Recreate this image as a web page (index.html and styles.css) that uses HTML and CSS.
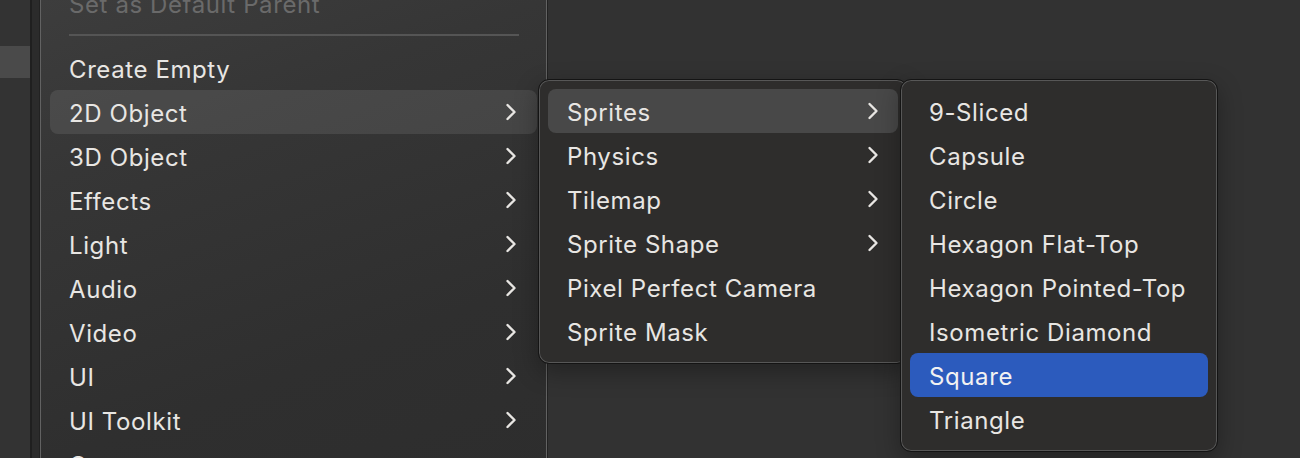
FILE: index.html
```html
<!DOCTYPE html>
<html lang="en">

<head>
  <meta charset="UTF-8">
  <title>GameObject Menu</title>
  <link rel="stylesheet" href="styles.css">
</head>

<body>
  <div class="desk">
    <div class="panel">
      <div class="panel-row"></div>
    </div>

    <div class="menu menu-main">
      <div class="item disabled">Set as Default Parent</div>
      <div class="sep"></div>
      <div class="item">Create Empty</div>
      <div class="item hover">2D Object <svg class="chev" viewBox="0 0 12 18"><path d="M2.5 2 L9.5 9 L2.5 16"/></svg></div>
      <div class="item">3D Object <svg class="chev" viewBox="0 0 12 18"><path d="M2.5 2 L9.5 9 L2.5 16"/></svg></div>
      <div class="item">Effects <svg class="chev" viewBox="0 0 12 18"><path d="M2.5 2 L9.5 9 L2.5 16"/></svg></div>
      <div class="item">Light <svg class="chev" viewBox="0 0 12 18"><path d="M2.5 2 L9.5 9 L2.5 16"/></svg></div>
      <div class="item">Audio <svg class="chev" viewBox="0 0 12 18"><path d="M2.5 2 L9.5 9 L2.5 16"/></svg></div>
      <div class="item">Video <svg class="chev" viewBox="0 0 12 18"><path d="M2.5 2 L9.5 9 L2.5 16"/></svg></div>
      <div class="item">UI <svg class="chev" viewBox="0 0 12 18"><path d="M2.5 2 L9.5 9 L2.5 16"/></svg></div>
      <div class="item">UI Toolkit <svg class="chev" viewBox="0 0 12 18"><path d="M2.5 2 L9.5 9 L2.5 16"/></svg></div>
      <div class="item">Camera</div>
    </div>

    <div class="menu menu-sprites">
      <div class="item hover">Sprites <svg class="chev" viewBox="0 0 12 18"><path d="M2.5 2 L9.5 9 L2.5 16"/></svg></div>
      <div class="item">Physics <svg class="chev" viewBox="0 0 12 18"><path d="M2.5 2 L9.5 9 L2.5 16"/></svg></div>
      <div class="item">Tilemap <svg class="chev" viewBox="0 0 12 18"><path d="M2.5 2 L9.5 9 L2.5 16"/></svg></div>
      <div class="item">Sprite Shape <svg class="chev" viewBox="0 0 12 18"><path d="M2.5 2 L9.5 9 L2.5 16"/></svg></div>
      <div class="item">Pixel Perfect Camera</div>
      <div class="item">Sprite Mask</div>
    </div>

    <div class="menu menu-shapes">
      <div class="item">9-Sliced</div>
      <div class="item">Capsule</div>
      <div class="item">Circle</div>
      <div class="item">Hexagon Flat-Top</div>
      <div class="item">Hexagon Pointed-Top</div>
      <div class="item">Isometric Diamond</div>
      <div class="item selected">Square</div>
      <div class="item">Triangle</div>
    </div>
  </div>
</body>

</html>
```

FILE: styles.css
```css
* {
  margin: 0;
  padding: 0;
  box-sizing: border-box;
}
body {
  background-color: #323232;
  font-family: "Inter", "Liberation Sans", sans-serif;
  overflow: hidden;
}
.desk {
  position: relative;
  width: 1300px;
  height: 458px;
  overflow: hidden;
}
.panel {
  width: 39px;
  height: 458px;
  padding-top: 46px;
  background: linear-gradient(to right, #333 0, #333 30px, #1f1f1f 30px, #1f1f1f 32px, #2b2b2b 32px);
}
.panel-row {
  width: 30px;
  height: 32px;
  background-color: #4a4a4a;
}

.menu {
  position: absolute;
  border: 1px solid #141414;
  border-radius: 11px;
  box-shadow: inset 0 0 0 1px #575757, 0 8px 24px rgba(0, 0, 0, 0.3);
  padding: 9px;
  background-color: #2e2d2c;
}
.menu-main {
  left: 39px;
  top: -29px;
  width: 509px;
  height: 520px;
  padding: 9px 10px;
  background: linear-gradient(160deg, #3e3e3e 0%, #363636 30%, #2f2f2f 70%, #2d2d2d 100%);
  box-shadow: inset 0 0 0 1px #626262;
  border-color: #222;
}
.menu-sprites {
  left: 538px;
  top: 79px;
  width: 370px;
  height: 285px;
}
.menu-shapes {
  left: 900px;
  top: 79px;
  width: 318px;
  height: 373px;
}

.item {
  height: 44px;
  display: flex;
  align-items: center;
  justify-content: space-between;
  padding: 2px 20px 0 19px;
  border-radius: 8px;
  color: #e8e6e3;
  font-size: 24px;
  letter-spacing: 0.6px;
  white-space: nowrap;
}
.item .chev {
  margin-top: -2px;
}
.item.hover {
  background-color: #484848;
}
.menu-main .item.hover {
  background-color: rgba(255, 255, 255, 0.09);
}
.item.selected {
  background-color: #2c5bbd;
  color: #f2f2f2;
}
.item.disabled {
  color: #6a6a6a;
}
.sep {
  height: 21px;
  padding: 9px 18px 0 19px;
}
.sep::after {
  content: "";
  display: block;
  height: 2px;
  background-color: #555;
}
.chev {
  width: 12px;
  height: 18px;
  fill: none;
  stroke: #e8e6e3;
  stroke-width: 2.4;
  stroke-linecap: round;
  stroke-linejoin: round;
}
.menu-sprites .item {
  padding-right: 19px;
}
```
